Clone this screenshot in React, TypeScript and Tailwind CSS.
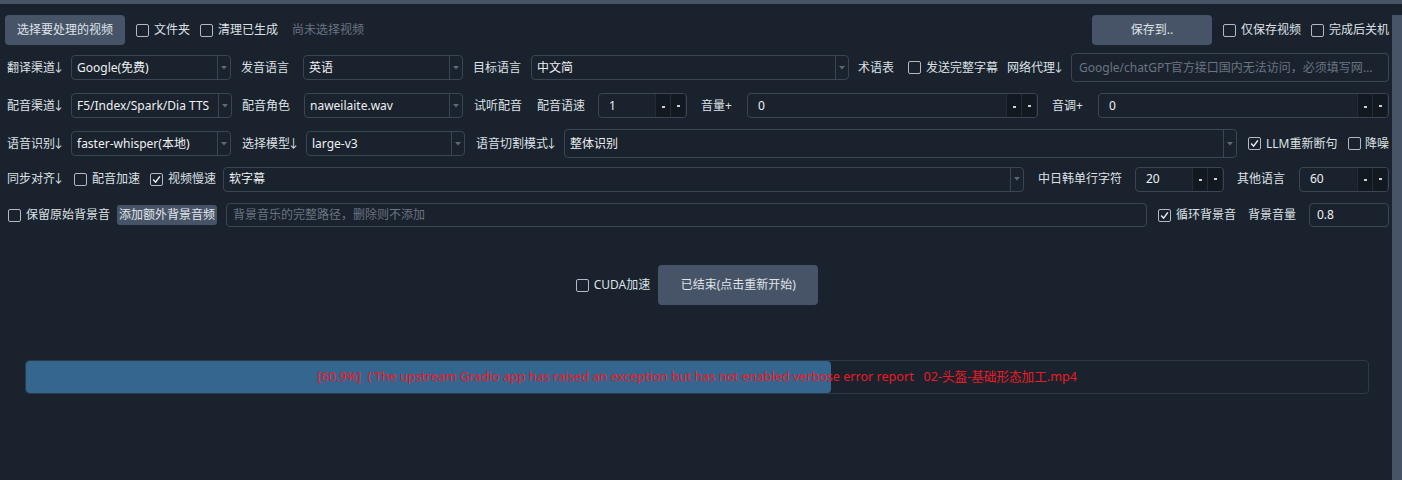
import React from "react";

const FONT = "font-['Noto_Sans','Noto_Sans_CJK_SC',sans-serif]";
const BORDER = "border-[#3b4553]";

function Check({ checked = false, label, className = "", gap = "ml-[5px]" }: { checked?: boolean; label: string; className?: string; gap?: string }) {
  return (
    <div className={`flex flex-none items-center ${className}`}>
      <span className="flex h-[13px] w-[13px] flex-none items-center justify-center rounded-[2px] border border-[#b4b9c0]">
        {checked && (
          <svg width="9" height="9" viewBox="0 0 9 9">
            <path d="M1.2 4.6 L3.6 7.2 L7.9 1.4" fill="none" stroke="#eceef1" strokeWidth="1.5" />
          </svg>
        )}
      </span>
      <span className={`${gap} whitespace-nowrap`}>{label}</span>
    </div>
  );
}

function Label({ text, arrow = false, className = "" }: { text: string; arrow?: boolean; className?: string }) {
  return (
    <span className={`flex flex-none items-center whitespace-nowrap ${className}`}>
      {text}
      {arrow && <span className="flex w-[7px] flex-none justify-center">↓</span>}
    </span>
  );
}

function Sel({ className, value }: { className: string; value: string }) {
  return (
    <div className={`flex items-stretch rounded-[4px] border ${BORDER} ${className}`}>
      <span className="flex min-w-0 flex-1 items-center truncate whitespace-nowrap pl-[5px] text-[#eef0f3]">{value}</span>
      <span className={`flex w-[13px] flex-none items-center justify-center border-l ${BORDER}`}>
        <svg width="6" height="4" viewBox="0 0 6 4">
          <path d="M0 0 L6 0 L3 3.5 Z" fill="#5d6775" />
        </svg>
      </span>
    </div>
  );
}

function SpinBtn({ lower = false }: { lower?: boolean }) {
  return (
    <span className="flex w-[15px] flex-none items-center justify-center border-l border-[#232c37] bg-[#121920]">
      <span className={`h-[2px] w-[3px] bg-[#cdd1d6] ${lower ? "mt-[2px]" : ""}`} />
    </span>
  );
}

function Spin({ className, value }: { className: string; value: string }) {
  return (
    <div className={`flex items-stretch overflow-hidden rounded-[4px] border ${BORDER} ${className}`}>
      <span className="flex min-w-0 flex-1 items-center pl-[10px] text-[#eef0f3]">{value}</span>
      <SpinBtn lower />
      <SpinBtn />
      <span className="w-[1px] flex-none" />
    </div>
  );
}

function Inp({ className, value, placeholder }: { className: string; value?: string; placeholder?: string }) {
  return (
    <div className={`flex items-center overflow-hidden rounded-[4px] border ${BORDER} ${className}`}>
      {value !== undefined ? (
        <span className="truncate whitespace-nowrap text-[#eef0f3]">{value}</span>
      ) : (
        <span className="truncate whitespace-nowrap text-[#6b7482]">{placeholder}</span>
      )}
    </div>
  );
}

export default function App() {
  return (
    <div className={`h-[480px] w-full overflow-hidden bg-[#1a222d] text-[12px] text-[#dde1e6] ${FONT}`}>
      <div className="h-[4px] w-full bg-[#475467]" />
      <div className="flex h-[476px]">
        <div className="flex min-w-0 flex-1 flex-col pl-[5px] pr-[3px]">
          {/* Row 1 */}
          <div className="mt-[11px] flex h-[30px] items-center">
            <button className="flex h-[30px] w-[120px] flex-none items-center justify-center rounded-[4px] bg-[#475467] text-[#dfe3e8]">
              选择要处理的视频
            </button>
            <Check label="文件夹" className="ml-[11px] w-[64px]" />
            <Check label="清理已生成" className="w-[92px]" />
            <span className="whitespace-nowrap text-[#6b7482]">尚未选择视频</span>
            <div className="ml-auto flex items-center">
              <button className="flex h-[30px] w-[120px] flex-none items-center justify-center rounded-[4px] bg-[#475467] text-[#dfe3e8]">
                保存到..
              </button>
              <Check label="仅保存视频" className="ml-[11px] w-[88px]" />
              <Check label="完成后关机" />
            </div>
          </div>

          {/* Row 2 */}
          <div className="mt-[8px] flex h-[29px] items-center pl-[2px]">
            <Label text="翻译渠道" arrow className="w-[64px]" />
            <Sel className="h-[25px] w-[160px] flex-none" value="Google(免费)" />
            <Label text="发音语言" className="ml-[10px] w-[62px]" />
            <Sel className="h-[25px] w-[160px] flex-none" value="英语" />
            <Label text="目标语言" className="ml-[10px] w-[58px]" />
            <Sel className="h-[25px] w-[318px] flex-none" value="中文简" />
            <Label text="术语表" className="ml-[9px] w-[50px]" />
            <Check label="发送完整字幕" className="w-[99px]" />
            <Label text="网络代理" arrow className="w-[64px]" />
            <Inp
              className="h-[29px] min-w-0 flex-1 px-[7px]"
              placeholder="Google/chatGPT官方接口国内无法访问，必须填写网络代理地址，例如 http://127.0.0.1:10809"
            />
          </div>

          {/* Row 3 */}
          <div className="mt-[9px] flex h-[29px] items-center pl-[2px]">
            <Label text="配音渠道" arrow className="w-[64px]" />
            <Sel className="h-[25px] w-[161px] flex-none" value="F5/Index/Spark/Dia TTS" />
            <Label text="配音角色" className="ml-[10px] w-[62px]" />
            <Sel className="h-[25px] w-[159px] flex-none" value="naweilaite.wav" />
            <Label text="试听配音" className="ml-[11px] w-[63px]" />
            <Label text="配音语速" className="w-[61px]" />
            <Spin className="h-[25px] w-[89px] flex-none" value="1" />
            <Label text="音量+" className="ml-[14px] w-[46px]" />
            <Spin className="h-[25px] w-[291px] flex-none" value="0" />
            <Label text="音调+" className="ml-[14px] w-[46px]" />
            <Spin className="h-[25px] min-w-0 flex-1" value="0" />
          </div>

          {/* Row 4 */}
          <div className="mt-[9px] flex h-[29px] items-center pl-[2px]">
            <Label text="语音识别" arrow className="w-[64px]" />
            <Sel className="h-[25px] w-[160px] flex-none" value="faster-whisper(本地)" />
            <Label text="选择模型" arrow className="ml-[11px] w-[64px]" />
            <Sel className="h-[25px] w-[159px] flex-none" value="large-v3" />
            <Label text="语音切割模式" arrow className="ml-[11px] w-[88px]" />
            <Sel className="h-[29px] w-[673px] flex-none" value="整体识别" />
            <Check checked label="LLM重新断句" className="ml-[11px] w-[100px]" />
            <Check label="降噪" gap="ml-[4px]" />
          </div>

          {/* Row 5 */}
          <div className="mt-[7px] flex h-[28px] items-center pl-[2px]">
            <Label text="同步对齐" arrow className="w-[67px]" />
            <Check label="配音加速" className="w-[76px]" />
            <Check checked label="视频慢速" className="w-[73px]" />
            <Sel className="h-[25px] w-[801px] flex-none" value="软字幕" />
            <Label text="中日韩单行字符" className="ml-[14px] w-[97px]" />
            <Spin className="h-[25px] w-[89px] flex-none" value="20" />
            <Label text="其他语言" className="ml-[13px] w-[62px]" />
            <Spin className="h-[25px] min-w-0 flex-1" value="60" />
          </div>

          {/* Row 6 */}
          <div className="mt-[8px] flex h-[28px] items-center pl-[3px]">
            <Check label="保留原始背景音" className="w-[109px]" />
            <button className="flex h-[20px] w-[100px] flex-none items-center justify-center rounded-[3px] bg-[#475467] text-[#e2e6ea]">
              添加额外背景音频
            </button>
            <Inp className="ml-[9px] h-[24px] w-[921px] flex-none px-[6px]" placeholder="背景音乐的完整路径，删除则不添加" />
            <Check checked label="循环背景音" className="ml-[11px] w-[90px]" />
            <Label text="背景音量" className="w-[61px]" />
            <Inp className="h-[24px] min-w-0 flex-1 px-[7px]" value="0.8" />
          </div>

          {/* CUDA row */}
          <div className="mt-[36px] flex h-[40px] items-center justify-center">
            <Check label="CUDA加速" />
            <button className="ml-[8px] flex h-[40px] w-[160px] flex-none items-center justify-center rounded-[4px] bg-[#475467] text-[#dfe3e8]">
              已结束(点击重新开始)
            </button>
          </div>

          {/* Progress */}
          <div className="relative mx-[20px] mt-[55px] h-[34px] overflow-hidden rounded-[4px] border border-[#2e3946]">
            <div className="h-full w-[60%] rounded-[4px] bg-[#356690]" />
            <div className="absolute inset-0 flex items-center justify-center whitespace-pre text-[12.6px] text-[#ec1a24]">
              {"[60.9%]  ('The upstream Gradio app has raised an exception but has not enabled verbose error report   02-头盔-基础形态加工.mp4"}
            </div>
          </div>
        </div>
        <div className="mt-[11px] w-[10px] flex-none bg-[#475467]" />
      </div>
    </div>
  );
}
